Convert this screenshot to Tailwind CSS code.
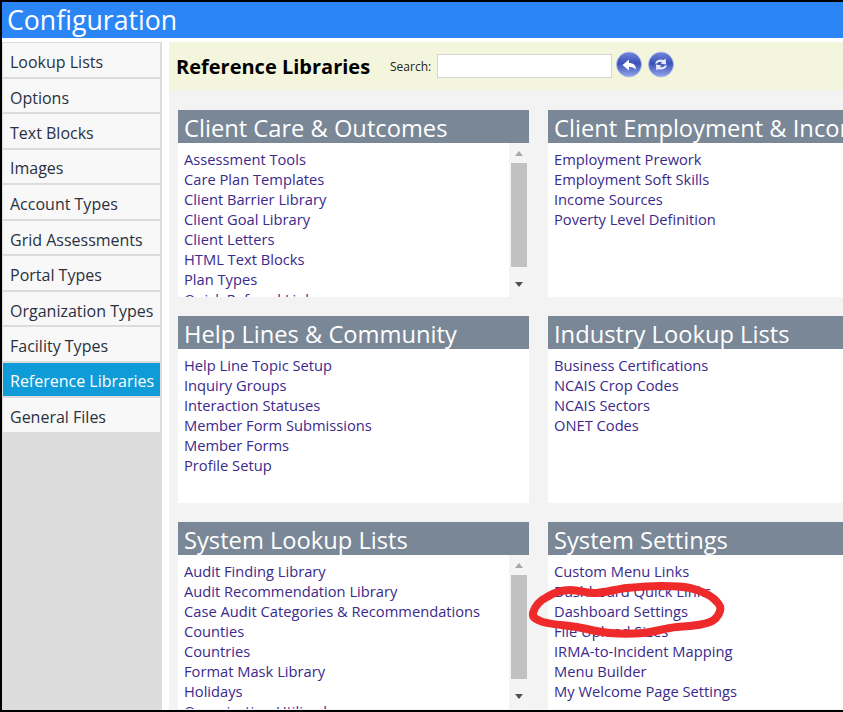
<!DOCTYPE html>
<html lang="en">
<head>
  <meta charset="UTF-8">
  <title>Configuration</title>
  <script src="https://cdn.jsdelivr.net/npm/@tailwindcss/browser@4"></script>
</head>
<body class="w-[843px] h-[712px] overflow-hidden bg-black font-['Open_Sans','Noto_Sans',sans-serif]">
  <div class="relative ml-[2px] mt-[2px] w-[841px] h-[708px] bg-white overflow-hidden flex flex-col">
    <div class="h-[36px] shrink-0 bg-[#2b85f5] text-white text-[26.7px] leading-[36px] pl-[5px]">Configuration</div>
    <div class="flex flex-1 mt-[4px] min-h-0">
      <!-- sidebar -->
      <nav class="w-[160px] shrink-0 bg-[#dcdcdc] pt-[1px] pl-[1px] pr-[2px] text-[16px] text-[#2a3140] whitespace-nowrap">
        <a class="flex items-center h-[33.5px] mb-[2px] pt-[4px] pl-[7px] bg-[#f8f8f8]">Lookup Lists</a>
        <a class="flex items-center h-[33.5px] mb-[2px] pt-[5px] pl-[7px] bg-[#f8f8f8]">Options</a>
        <a class="flex items-center h-[33.5px] mb-[2px] pt-[4px] pl-[7px] bg-[#f8f8f8]">Text Blocks</a>
        <a class="flex items-center h-[33.5px] mb-[2px] pt-[4px] pl-[7px] bg-[#f8f8f8]">Images</a>
        <a class="flex items-center h-[33.5px] mb-[2px] pt-[5px] pl-[7px] bg-[#f8f8f8]">Account Types</a>
        <a class="flex items-center h-[33.5px] mb-[2px] pt-[5px] pl-[7px] bg-[#f8f8f8]">Grid Assessments</a>
        <a class="flex items-center h-[33.5px] mb-[2px] pt-[4px] pl-[7px] bg-[#f8f8f8]">Portal Types</a>
        <a class="flex items-center h-[33.5px] mb-[2px] pt-[5px] pl-[7px] bg-[#f8f8f8]">Organization Types</a>
        <a class="flex items-center h-[33.5px] mb-[2px] pt-[4px] pl-[7px] bg-[#f8f8f8]">Facility Types</a>
        <a class="flex items-center h-[33.5px] mb-[2px] pt-[4px] pl-[7px] bg-[#0f9bd7] text-white">Reference Libraries</a>
        <a class="flex items-center h-[33.5px] mb-[2px] pt-[4px] pl-[7px] bg-[#f8f8f8]">General Files</a>
      </nav>
      <main class="ml-[7px] flex-1 min-w-0 bg-[#f3f3f3] overflow-hidden">
        <div class="h-[48px] bg-[#f3f5dc] flex items-center pl-[7px]">
          <h1 class="text-[20px] pt-[1px] font-bold text-black w-[214px] whitespace-nowrap">Reference Libraries</h1>
          <span class="text-[12px] pt-[1px] text-[#222] w-[47px]">Search:</span>
          <input class="w-[175px] h-[24px] bg-white border border-[#d4d4d4]">
          <svg class="ml-[4px] mb-[3px]" width="26" height="27" viewBox="0 0 26 27">
            <defs><linearGradient id="orb" x1="0" y1="0" x2="0" y2="1"><stop offset="0" stop-color="#7488dc"/><stop offset=".45" stop-color="#3a50b8"/><stop offset="1" stop-color="#93a6e8"/></linearGradient></defs>
            <circle cx="13" cy="13.5" r="12.5" fill="url(#orb)" stroke="#b4c0ee" stroke-width=".8"/>
            <path d="M6.5 14L13 8.5V12C17 12 20 14 20 18.5C18 16.5 16 16 13 16V19.5Z" fill="#fff"/>
          </svg>
          <svg class="ml-[6px] mb-[3px]" width="26" height="27" viewBox="0 0 26 27">
            <circle cx="13" cy="13.5" r="12.5" fill="url(#orb)" stroke="#b4c0ee" stroke-width=".8"/>
            <path d="M7 12.5c1-3.5 5.5-5 8.5-3.5l2-1.5.7 6-5.7-1 1.6-1.5c-2.3-.8-4 0-5 1.5zM19 14.5c-1 3.5-5.5 5-8.5 3.5l-2 1.5-.7-6 5.7 1-1.6 1.5c2.3.8 4 0 5-1.5z" fill="#e6ebfb"/>
          </svg>
        </div>
        <div class="grid grid-cols-[351px_351px] gap-x-[19px] gap-y-[19px] pl-[9px] pt-[20px]">
          <section class="h-[187px] bg-white overflow-hidden flex flex-col">
            <h2 class="h-[33px] shrink-0 bg-[#7a8797] text-white text-[23.7px] leading-[37px] pl-[6px] whitespace-nowrap">Client Care &amp; Outcomes</h2>
            <div class="flex flex-1 min-h-0">
              <ul class="flex-1 pl-[6px] pt-[6px] text-[14.7px] leading-[20px] text-[#3b2a8c] overflow-hidden">
                <li>Assessment Tools</li><li>Care Plan Templates</li><li>Client Barrier Library</li><li>Client Goal Library</li><li>Client Letters</li><li>HTML Text Blocks</li><li>Plan Types</li><li>Quick Referral Links</li>
              </ul>
              <div class="w-[20px] bg-[#f4f4f4] flex flex-col items-center">
                <span class="mt-[8px] w-0 h-0 border-x-[4px] border-x-transparent border-b-[5px] border-b-[#a8a8a8]"></span>
                <span class="mt-[7px] w-[16px] h-[104px] bg-[#c1c1c1]"></span>
                <span class="mt-[15px] w-0 h-0 border-x-[4px] border-x-transparent border-t-[5px] border-t-[#505050]"></span>
              </div>
            </div>
          </section>
          <section class="h-[187px] bg-white overflow-hidden flex flex-col">
            <h2 class="h-[33px] shrink-0 bg-[#7a8797] text-white text-[23.7px] leading-[37px] pl-[6px] whitespace-nowrap">Client Employment &amp; Income</h2>
            <ul class="flex-1 pl-[6px] pt-[6px] text-[14.7px] leading-[20px] text-[#3b2a8c]">
              <li>Employment Prework</li><li>Employment Soft Skills</li><li>Income Sources</li><li>Poverty Level Definition</li>
            </ul>
          </section>
          <section class="h-[187px] bg-white overflow-hidden flex flex-col">
            <h2 class="h-[33px] shrink-0 bg-[#7a8797] text-white text-[23.7px] leading-[37px] pl-[6px] whitespace-nowrap">Help Lines &amp; Community</h2>
            <ul class="flex-1 pl-[6px] pt-[6px] text-[14.7px] leading-[20px] text-[#3b2a8c]">
              <li>Help Line Topic Setup</li><li>Inquiry Groups</li><li>Interaction Statuses</li><li>Member Form Submissions</li><li>Member Forms</li><li>Profile Setup</li>
            </ul>
          </section>
          <section class="h-[187px] bg-white overflow-hidden flex flex-col">
            <h2 class="h-[33px] shrink-0 bg-[#7a8797] text-white text-[23.7px] leading-[37px] pl-[6px] whitespace-nowrap">Industry Lookup Lists</h2>
            <ul class="flex-1 pl-[6px] pt-[6px] text-[14.7px] leading-[20px] text-[#3b2a8c]">
              <li>Business Certifications</li><li>NCAIS Crop Codes</li><li>NCAIS Sectors</li><li>ONET Codes</li>
            </ul>
          </section>
          <section class="h-[187px] bg-white overflow-hidden flex flex-col">
            <h2 class="h-[33px] shrink-0 bg-[#7a8797] text-white text-[23.7px] leading-[36px] pl-[6px] whitespace-nowrap">System Lookup Lists</h2>
            <div class="flex flex-1 min-h-0">
              <ul class="flex-1 pl-[6px] pt-[6px] text-[14.7px] leading-[20px] text-[#3b2a8c] overflow-hidden">
                <li>Audit Finding Library</li><li>Audit Recommendation Library</li><li>Case Audit Categories &amp; Recommendations</li><li>Counties</li><li>Countries</li><li>Format Mask Library</li><li>Holidays</li><li>Organization Utilized</li>
              </ul>
              <div class="w-[20px] bg-[#f4f4f4] flex flex-col items-center">
                <span class="mt-[8px] w-0 h-0 border-x-[4px] border-x-transparent border-b-[5px] border-b-[#a8a8a8]"></span>
                <span class="mt-[7px] w-[16px] h-[104px] bg-[#c1c1c1]"></span>
                <span class="mt-[15px] w-0 h-0 border-x-[4px] border-x-transparent border-t-[5px] border-t-[#505050]"></span>
              </div>
            </div>
          </section>
          <section class="h-[187px] bg-white overflow-hidden flex flex-col">
            <h2 class="h-[33px] shrink-0 bg-[#7a8797] text-white text-[23.7px] leading-[36px] pl-[6px] whitespace-nowrap">System Settings</h2>
            <ul class="flex-1 pl-[6px] pt-[6px] text-[14.7px] leading-[20px] text-[#3b2a8c]">
              <li>Custom Menu Links</li><li>Dashboard Quick Links</li><li>Dashboard Settings</li><li>File Upload Sizes</li><li>IRMA-to-Incident Mapping</li><li>Menu Builder</li><li>My Welcome Page Settings</li>
            </ul>
          </section>
        </div>
      </main>
    </div>
    <!-- hand drawn marker circle -->
    <svg class="absolute left-0 top-0 pointer-events-none" width="841" height="708" viewBox="2 2 841 708">
      <path d="M533 613C535 605 541 600 547 597C555 592 562 590 570 590C580 590 588 594 597 593C607 592 617 589 627 588C638 587 649 586 660 586C673 586 686 586 697 590C706 593 713 597 717 602C720 605 721 608 720 611C718 617 715 620 710 622C700 626 689 626 677 627C665 628 655 632 643 633C632 634 621 634 610 633C599 632 588 629 577 627C566 625 554 625 543 622C537 620 532 618 533 613Z" fill="none" stroke="#ee2a2a" stroke-width="8" stroke-linejoin="round"/>
    </svg>
  </div>
</body>
</html>
